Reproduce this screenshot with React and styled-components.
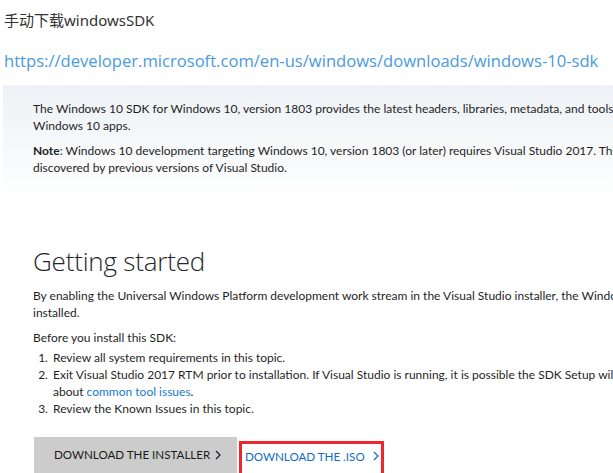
import React from 'react';
import styled, { createGlobalStyle } from 'styled-components';

const GlobalStyle = createGlobalStyle`
  html, body {
    margin: 0;
    padding: 0;
    background: #ffffff;
    overflow: hidden;
  }
  body {
    width: 613px;
    height: 473px;
  }
`;

const Page = styled.div`
  width: 613px;
  height: 473px;
  overflow: hidden;
  font-family: "Noto Sans", "Noto Sans CJK SC", sans-serif;
`;

const PostTitle = styled.div`
  padding: 9px 0 0 4px;
  height: 22px;
  font-family: "Noto Sans", "Noto Sans CJK SC", sans-serif;
  font-size: 15px;
  line-height: 22px;
  color: #333333;
`;

const SourceLink = styled.a`
  display: block;
  margin: 18px 0 0 4px;
  font-family: "Open Sans", "Noto Sans", sans-serif;
  font-size: 16.6px;
  line-height: 24px;
  color: #4a9ae0;
  text-decoration: none;
  white-space: nowrap;
`;

const Shot = styled.div`
  margin-top: 12px;
  margin-left: 3px;
  font-family: "Lato", "Open Sans", sans-serif;
  color: #1f1f1f;
  white-space: nowrap;
`;

const Banner = styled.section`
  padding: 16px 0 20px 30px;
  background: linear-gradient(180deg, #eef2f6 0%, #f6f8fa 55%, #ffffff 100%);
`;

const Para = styled.p`
  margin: 0 0 ${({ $gap }) => $gap ?? 9}px 0;
  font-size: 12px;
  line-height: 16.5px;
`;

const Body = styled.section`
  padding: 50px 0 0 30px;
`;

const Heading = styled.h2`
  margin: 0 0 12px 0;
  font-family: "Open Sans", "Lato", sans-serif;
  font-weight: 300;
  font-size: 26px;
  line-height: 30px;
  color: #262626;
  letter-spacing: -0.2px;
`;

const Steps = styled.ol`
  margin: 0 0 20px 0;
  padding: 0 0 0 18px;
  font-size: 12px;
  line-height: 17px;

  li {
    padding-left: 2px;
  }
`;

const InlineLink = styled.a`
  color: #1778d2;
  text-decoration: none;
`;

const Actions = styled.div`
  display: flex;
  align-items: flex-start;
  gap: 2px;
  margin-left: 1px;
`;

const PrimaryButton = styled.div`
  display: flex;
  align-items: center;
  width: 203px;
  height: 40px;
  padding: 0 0 4px 20px;
  box-sizing: border-box;
  background: #cccccc;
  font-size: 11.6px;
  color: #1a1a1a;
  text-transform: uppercase;
`;

const IsoButton = styled.div`
  display: flex;
  align-items: center;
  margin-top: 4px;
  width: 145px;
  height: 40px;
  padding: 0 0 9px 3px;
  box-sizing: border-box;
  border: 3px solid #f0262e;
  font-size: 11.6px;
  color: #0f6cc4;
  text-transform: uppercase;
`;

const Chevron = styled.svg`
  margin-left: ${({ $space }) => $space}px;
  flex: none;
`;

const Arrow = ({ space, color }) => (
  <Chevron $space={space} width="6" height="10" viewBox="0 0 6 10">
    <polyline points="1,1 5,5 1,9" fill="none" stroke={color} strokeWidth="1.2" />
  </Chevron>
);

export default function App() {
  return (
    <Page>
      <GlobalStyle />
      <PostTitle>手动下载windowsSDK</PostTitle>
      <SourceLink href="#">https://developer.microsoft.com/en-us/windows/downloads/windows-10-sdk</SourceLink>
      <Shot>
        <Banner>
          <Para>
            The Windows 10 SDK for Windows 10, version 1803 provides the latest headers, libraries, metadata, and tools for building
            <br />
            Windows 10 apps.
          </Para>
          <Para $gap={0}>
            <strong>Note</strong>: Windows 10 development targeting Windows 10, version 1803 (or later) requires Visual Studio 2017. This SDK will not be
            <br />
            discovered by previous versions of Visual Studio.
          </Para>
        </Banner>
        <Body>
          <Heading>Getting started</Heading>
          <Para>
            By enabling the Universal Windows Platform development work stream in the Visual Studio installer, the Windows 10 SDK is
            <br />
            installed.
          </Para>
          <Para $gap={2}>Before you install this SDK:</Para>
          <Steps>
            <li>Review all system requirements in this topic.</li>
            <li>
              Exit Visual Studio 2017 RTM prior to installation. If Visual Studio is running, it is possible the SDK Setup will fail. Learn more
              <br />
              about <InlineLink href="#">common tool issues</InlineLink>.
            </li>
            <li>Review the Known Issues in this topic.</li>
          </Steps>
          <Actions>
            <PrimaryButton>
              Download the installer
              <Arrow space={5} color="#1a1a1a" />
            </PrimaryButton>
            <IsoButton>
              Download the .ISO
              <Arrow space={8} color="#0f6cc4" />
            </IsoButton>
          </Actions>
        </Body>
      </Shot>
    </Page>
  );
}
